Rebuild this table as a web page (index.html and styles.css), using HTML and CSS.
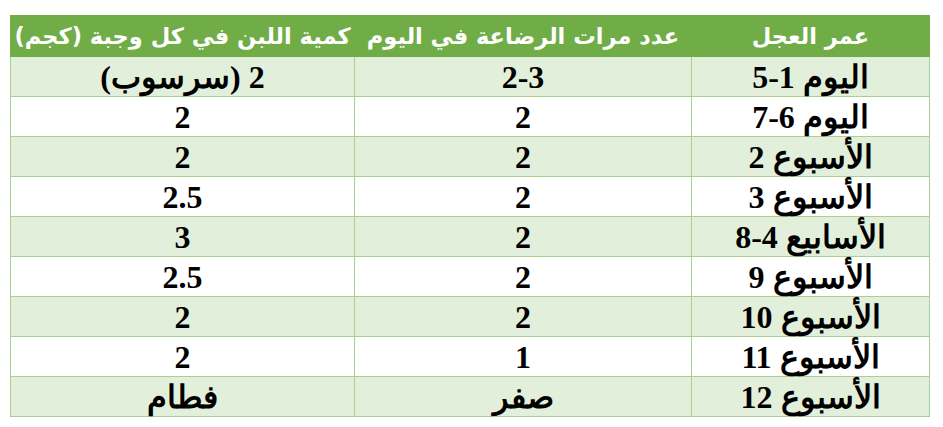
FILE: index.html
```html
<!DOCTYPE html>
<html lang="ar">
<head>
<meta charset="utf-8">
<title>جدول رضاعة العجل</title>
<link rel="stylesheet" href="styles.css">
</head>
<body>
<div class="page">
<table class="feed" dir="rtl">
  <colgroup>
    <col class="c-age">
    <col class="c-times">
    <col class="c-milk">
  </colgroup>
  <thead>
    <tr><th>عمر العجل</th><th>عدد مرات الرضاعة في اليوم</th><th>كمية اللبن في كل وجبة (كجم)</th></tr>
  </thead>
  <tbody>
    <tr class="alt"><td>اليوم <span dir="ltr">5-1</span></td><td><span dir="ltr">2-3</span></td><td>2 (سرسوب)</td></tr>
    <tr><td>اليوم <span dir="ltr">7-6</span></td><td>2</td><td>2</td></tr>
    <tr class="alt"><td>الأسبوع 2</td><td>2</td><td>2</td></tr>
    <tr><td>الأسبوع 3</td><td>2</td><td>2.5</td></tr>
    <tr class="alt"><td>الأسابيع <span dir="ltr">8-4</span></td><td>2</td><td>3</td></tr>
    <tr><td>الأسبوع 9</td><td>2</td><td>2.5</td></tr>
    <tr class="alt"><td>الأسبوع 10</td><td>2</td><td>2</td></tr>
    <tr><td>الأسبوع 11</td><td>1</td><td>2</td></tr>
    <tr class="alt"><td>الأسبوع 12</td><td>صفر</td><td>فطام</td></tr>
  </tbody>
</table>
</div>
</body>
</html>
```
FILE: styles.css
```css
html, body {
  margin: 0;
  padding: 0;
  background: #ffffff;
}
.page {
  padding: 15px 0 0 10px;
}
.feed {
  border-collapse: collapse;
  table-layout: fixed;
  width: 919px;
}
.c-age { width: 238px; }
.c-times { width: 337px; }
.c-milk { width: 344px; }
.feed th {
  background: #70ad47;
  color: #ffffff;
  font-family: "DejaVu Sans", "Noto Sans", sans-serif;
  font-weight: bold;
  font-size: 22.5px;
  height: 40px;
  padding: 0;
  text-align: center;
  white-space: nowrap;
  border: 1px solid #70ad47;
}
.feed td {
  font-family: "Liberation Serif", "DejaVu Serif", serif;
  font-weight: bold;
  font-size: 32px;
  color: #000000;
  height: 39px;
  padding: 0;
  text-align: center;
  border: 1px solid #a9d08e;
  line-height: 1;
}
.feed tr.alt td {
  background: #e2efda;
}
```
